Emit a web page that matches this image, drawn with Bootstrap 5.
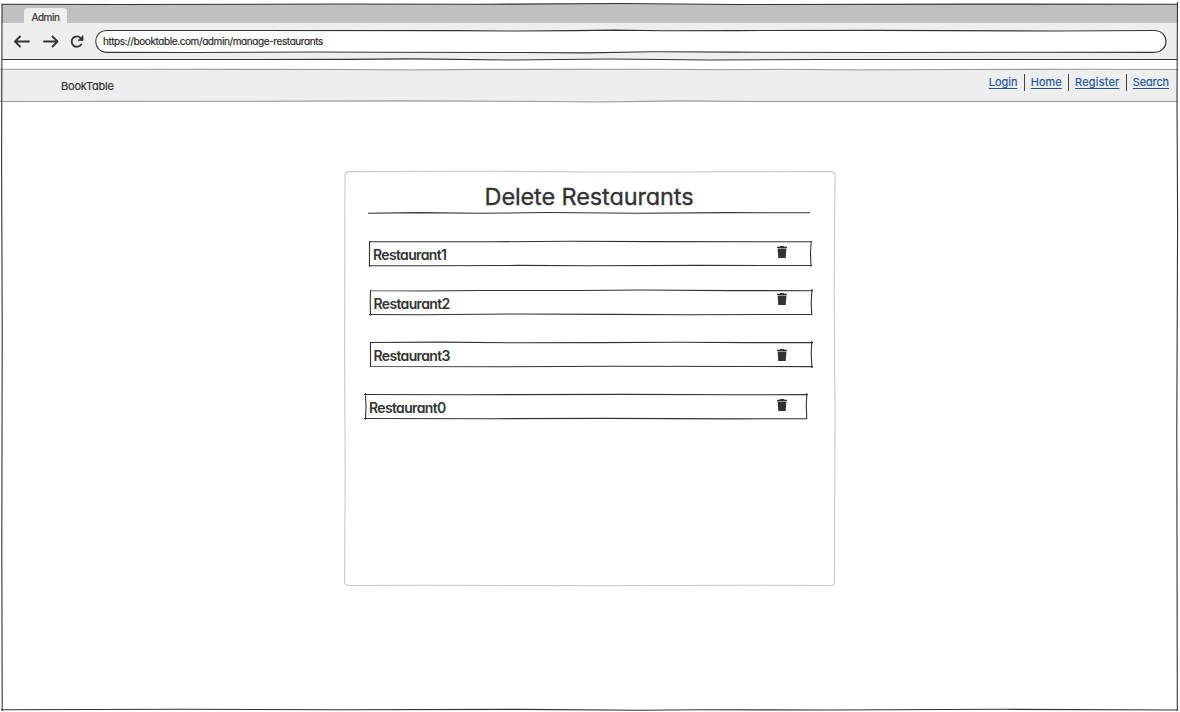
<!DOCTYPE html>
<html lang="en">
<head>
<meta charset="utf-8">
<meta name="viewport" content="width=device-width, initial-scale=1">
<title>Admin</title>
<link href="https://cdn.jsdelivr.net/npm/bootstrap@5.3.0/dist/css/bootstrap.min.css" rel="stylesheet">
<style>
  body { font-family: Inter, "Liberation Sans", sans-serif; font-feature-settings: "cv11"; color: #333; background: #fff; overflow: hidden; }
  .browser { width: 1180px; height: 712px; padding: 4px 3px 2px 2px; }
  .sketch { overflow: visible; pointer-events: none; fill: none; stroke: #333; stroke-width: 1.1; stroke-linejoin: round; }
  .tabstrip { height: 19px; background: #c0c0c0; padding-left: 22px; }
  .page-tab { width: 43px; height: 15px; background: #eee; border-radius: 4px 4px 0 0; font-size: 10px; line-height: 18px; letter-spacing: -.45px; padding-left: 7.5px; -webkit-text-stroke: .2px #333; }
  .toolbar { height: 36px; background: #eee; padding: 0 11px 0 12px; }
  .address { height: 23px; margin-left: 11px; padding-left: 8px; background: #fff; border-radius: 12px; font-size: 10px; line-height: 22px; letter-spacing: -.4px; color: #222; -webkit-text-stroke: .15px #222; }
  .site-nav { height: 33px; margin: 10px 0 0 -2px; padding: 0 8px 0 61px; background: #eee; }
  .brand { font-size: 11px; line-height: 34px; letter-spacing: -.2px; color: #333; -webkit-text-stroke: .2px #333; }
  .site-links { padding-top: 5px; font-size: 11px; line-height: 17px; gap: 6.2px; -webkit-text-stroke: .15px #1c539b; }
  .site-links a { color: #1c539b; text-decoration: underline; text-underline-offset: 2px; text-decoration-thickness: 1px; }
  .site-links .wider { letter-spacing: .22px; }
  .site-links .tighter { letter-spacing: -.12px; }
  .bar { width: 1px; height: 17px; background: #444; }
  .panel { width: 491px; height: 415px; margin: 69px 0 0 342px; padding: 10px 24px; }
  .panel-title { font-size: 23.5px; line-height: 31px; letter-spacing: -.12px; font-weight: 400; width: 442px; margin: 0; color: #333; -webkit-text-stroke: .35px #333; }
  .entry { width: 442px; height: 25px; padding-left: 4px; font-size: 14px; font-weight: 600; line-height: 27px; letter-spacing: -.66px; }
  .e1 { margin-top: 27px; margin-left: 1px; }
  .e2 { margin-top: 24px; margin-left: 1.5px; }
  .e3 { margin-top: 27px; margin-left: 1.5px; }
  .e4 { margin-top: 27px; margin-left: -3px; }
  .trash { width: 10px; height: 12px; fill: #333; flex: none; }
  .e1 .trash { margin: 5px 24px 0 0; }
  .e2 .trash { margin: 3px 24.5px 0 0; }
  .e3 .trash { margin: 7px 24.5px 0 0; }
  .e4 .trash { margin: 5px 20px 0 0; }
</style>
</head>
<body>
<div class="browser position-relative">
  <div class="tabstrip d-flex align-items-end"><div class="page-tab"><span>Admin</span></div></div>
  <div class="toolbar d-flex align-items-center">
    <svg width="70" height="16" viewBox="0 0 70 16" fill="none" stroke="#333" stroke-width="1.8" stroke-linecap="round" stroke-linejoin="round">
      <path d="M15 8.500H1.500M6 3.500L1 8.500L6 13.500"/>
      <path d="M30 8.500H43M38.500 3.500L43.500 8.500L38.500 13.500"/>
      <path d="M67.200 11.500A5.200 5.200 0 1 1 66.500 4.800"/>
      <path d="M69 2.800V7.400H64.400Z" fill="#333" stroke-width=".8"/>
    </svg>
    <div class="address position-relative flex-grow-1">https://booktable.com/admin/manage-restaurants
      <svg class="sketch position-absolute top-0 start-0" width="1071" height="23"><path d="M12 .5L360 .6L420 1L480 .6L520 .1L570 .8L640 .6L780 .4L960 1L1059 .5C1075 .5 1075 22.400 1059 22.400L940 22.200L780 22.500L640 22.100L560 21.800L490 22.900L430 22.500L280 22.300L220 22L100 22.500L12 22.400C-3 22.400-3 .5 12 .5"/></svg>
    </div>
  </div>
  <nav class="site-nav position-relative d-flex justify-content-between">
    <span class="brand">BookTable</span>
    <div class="site-links d-flex">
      <a href="#">Login</a><span class="bar"></span><a href="#">Home</a><span class="bar"></span><a href="#" class="wider">Register</a><span class="bar"></span><a href="#" class="tighter">Search</a>
    </div>
    <svg class="sketch position-absolute top-0 start-0" width="1178" height="33"><path stroke="#999" d="M0 .2L140 .3L340 .5L410 1L480 .4L660 .3L720 .8L780 .3L860 1L960 .5L1090 .2L1178 .5M0 32.500L200 32.300L400 31.900L520 32.300L600 33L680 31.900L760 32.500L1178 32.500"/></svg>
  </nav>
  <main class="panel position-relative">
    <svg class="sketch position-absolute top-0 start-0" width="491" height="415"><path stroke="#c8c8c8" d="M4 .6L150 .3L250 1L487 .6Q491 1 491 4L490.200 120L491 240L490.500 411Q490 414.500 487 414.500L400 414.200L260 414.700L80 414.300L4 414.500Q.8 414 .6 411L1.200 300L.6 180L1 4Q1 1 4 .6"/></svg>
    <h1 class="panel-title text-center">Delete Restaurants</h1>
    <svg class="sketch d-block" width="442" height="2"><path d="M0 1.300L50 .6L110 1.300L180 .5L270 1.200L360 .6L442 .8"/></svg>
    <div class="entry e1 position-relative d-flex justify-content-between">
      <svg class="sketch position-absolute top-0 start-0" width="442" height="25"><path d="M0 .7L120 .8L200 .3L280 .6L443 .8M442.200 0L441.500 12L442 25.500M0 24.500L60 24.700L150 24.400L220 24.800L330 24.400L443 24.500M.6 0L.4 26"/></svg>
      <span>Restaurant1</span><svg class="trash" viewBox="0 0 10 12"><path d="M3 0H7L7.400 .8H10V2H0V.8H2.600ZM.6 2.600H9.400L8.700 12H1.300Z"/></svg>
    </div>
    <div class="entry e2 position-relative d-flex justify-content-between">
      <svg class="sketch position-absolute top-0 start-0" width="442" height="25"><path d="M0 .5L50 1L110 .5L210 .5L270 0L360 .6L443 .7M442 -1L441.200 12L441.700 25M-1 24.500L50 24.700L140 24L240 24.400L320 24.700L442 24.400M.5 0L.2 12L.6 26"/></svg>
      <span>Restaurant2</span><svg class="trash" viewBox="0 0 10 12"><path d="M3 0H7L7.400 .8H10V2H0V.8H2.600ZM.6 2.600H9.400L8.700 12H1.300Z"/></svg>
    </div>
    <div class="entry e3 position-relative d-flex justify-content-between">
      <svg class="sketch position-absolute top-0 start-0" width="442" height="25"><path d="M0 .5L70 .1L150 .8L230 .6L310 .2L380 .6L443 .6M441.800 -1L441.200 12L442 26M0 24.500L130 24.800L240 24.300L443 24.600M.5 0V25"/></svg>
      <span>Restaurant3</span><svg class="trash" viewBox="0 0 10 12"><path d="M3 0H7L7.400 .8H10V2H0V.8H2.600ZM.6 2.600H9.400L8.700 12H1.300Z"/></svg>
    </div>
    <div class="entry e4 position-relative d-flex justify-content-between">
      <svg class="sketch position-absolute top-0 start-0" width="442" height="25"><path d="M-1 .5L100 .7L260 .4L370 .8L443 .6M441.800 -.8L441.300 12L441.800 25M-1 24.500L130 24.700L240 24.400L370 24.900L442 24.600M.4 -1L1 12L.6 26"/></svg>
      <span>Restaurant0</span><svg class="trash" viewBox="0 0 10 12"><path d="M3 0H7L7.400 .8H10V2H0V.8H2.600ZM.6 2.600H9.400L8.700 12H1.300Z"/></svg>
    </div>
  </main>
  <svg class="sketch position-absolute top-0 start-0" width="1180" height="712"><path d="M1 4.300L120 4.500L340 4L480 4.300L620 3.500L740 4.500L970 4.100L1178 4.300M1 709.800L180 709.200L340 709.700L520 709.400L640 710.300L700 709.700L830 710L1000 709.300L1178 710M2 4L1.600 160L2.200 330L1.800 550L2.200 711M1177.500 2L1177 100L1177.600 220L1176.800 430L1177.300 711M2 59.500L350 59.400L410 58.900L510 60L610 59L710 60L820 59.500L1177 59.500"/></svg>
</div>
<script src="https://cdn.jsdelivr.net/npm/bootstrap@5.3.0/dist/js/bootstrap.bundle.min.js"></script>
</body>
</html>
